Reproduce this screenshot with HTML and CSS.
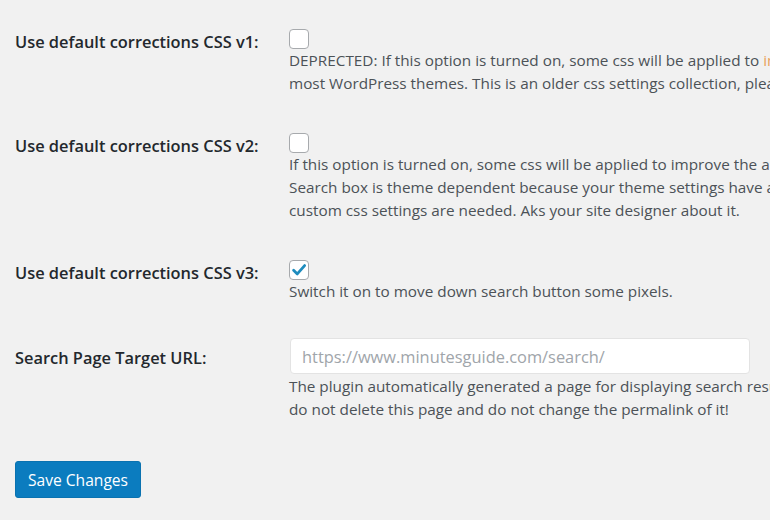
FILE: index.html
```html
<!DOCTYPE html>
<html lang="en">
<head>
<meta charset="utf-8">
<title>Settings</title>
<link rel="stylesheet" href="styles.css">
</head>
<body>
<form class="settings">
  <div class="row">
    <div class="label">Use default corrections CSS v1:</div>
    <div class="field">
      <span class="check"></span>
      <p class="desc">DEPRECTED: If this option is turned on, some css will be applied to <span class="hl">improve</span><br>most WordPress themes. This is an older css settings collection, please</p>
    </div>
  </div>
  <div class="row">
    <div class="label">Use default corrections CSS v2:</div>
    <div class="field">
      <span class="check"></span>
      <p class="desc">If this option is turned on, some css will be applied to improve the appearance<br>Search box is theme dependent because your theme settings have a big<br>custom css settings are needed. Aks your site designer about it.</p>
    </div>
  </div>
  <div class="row">
    <div class="label">Use default corrections CSS v3:</div>
    <div class="field">
      <span class="check checked"><svg viewBox="0 0 20 20" width="20" height="20"><path d="M4.6 10.2 L8.3 13.9 L15.6 5.6" fill="none" stroke="#1e8cbe" stroke-width="2.8" stroke-linecap="round" stroke-linejoin="round"/></svg></span>
      <p class="desc">Switch it on to move down search button some pixels.</p>
    </div>
  </div>
  <div class="row">
    <div class="label label-input">Search Page Target URL:</div>
    <div class="field">
      <input class="text" type="text" placeholder="https://www.minutesguide.com/search/">
      <p class="desc">The plugin automatically generated a page for displaying search results.<br>do not delete this page and do not change the permalink of it!</p>
    </div>
  </div>
  <div class="submit">
    <button type="button" class="button">Save Changes</button>
  </div>
</form>
</body>
</html>
```

FILE: styles.css
```css
html, body {
  margin: 0;
  padding: 0;
  background: #f1f1f1;
  overflow: hidden;
}
body {
  width: 770px;
  height: 520px;
  font-family: "Open Sans", "Noto Sans", sans-serif;
  color: #23282d;
}
.settings {
  padding: 10px 0 0 15px;
}
.row {
  display: flex;
  padding: 19px 0;
}
.label {
  flex: 0 0 274px;
  font-size: 16.4px;
  font-weight: 600;
  line-height: 26px;
  color: #23282d;
  white-space: nowrap;
}
.label-input {
  padding-top: 4px;
}
.field {
  flex: 0 0 auto;
  display: flex;
  flex-direction: column;
  align-items: flex-start;
}
.check {
  display: block;
  width: 18px;
  height: 18px;
  border: 1px solid #a7aaad;
  border-radius: 4px;
  background: #fff;
  box-sizing: content-box;
}
.check svg {
  display: block;
  margin: -1px;
}
.desc {
  margin: 0;
  font-size: 15.3px;
  line-height: 23px;
  color: #4c5257;
  white-space: nowrap;
}
.hl {
  color: #e9a35c;
}
.text {
  margin: -3px 0 1px 1px;
  width: 460px;
  height: 36px;
  box-sizing: border-box;
  border: 1px solid #e3e3e3;
  border-radius: 4px;
  background: #fff;
  padding: 0 11px;
  font-family: inherit;
  font-size: 16.4px;
  color: #32373c;
  outline: none;
}
.text::placeholder {
  color: #a0a5aa;
}
.submit {
  padding-top: 21px;
}
.button {
  display: block;
  width: 126px;
  height: 37px;
  border: 1px solid #0a72b0;
  border-radius: 3px;
  background: #0b7cbf;
  color: #fff;
  font-family: inherit;
  font-size: 15.6px;
  padding: 0;
  cursor: pointer;
}
```
